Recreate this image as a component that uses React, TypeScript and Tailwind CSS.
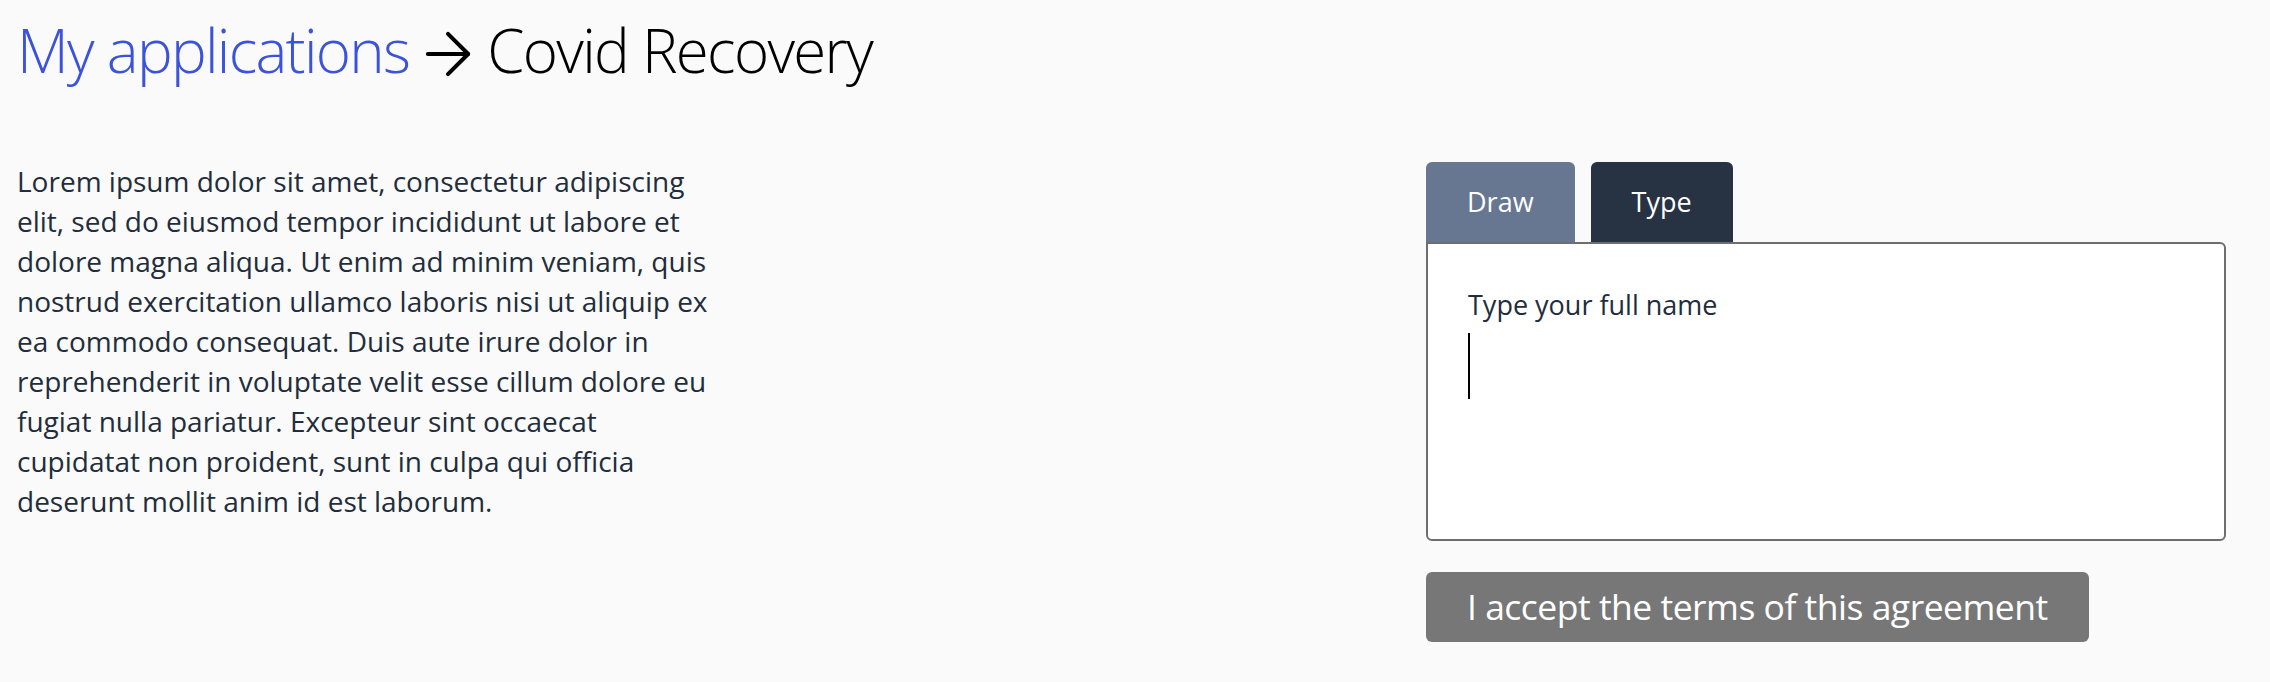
import React from 'react';

const LOREM =
  'Lorem ipsum dolor sit amet, consectetur adipiscing elit, sed do eiusmod tempor incididunt ut labore et dolore magna aliqua. Ut enim ad minim veniam, quis nostrud exercitation ullamco laboris nisi ut aliquip ex ea commodo consequat. Duis aute irure dolor in reprehenderit in voluptate velit esse cillum dolore eu fugiat nulla pariatur. Excepteur sint occaecat cupidatat non proident, sunt in culpa qui officia deserunt mollit anim id est laborum.';

export default function App() {
  return (
    <div className="min-h-screen bg-[#fafafa] font-['Open_Sans',sans-serif] pl-[17px] pr-[44px] pt-[8px]">
      <h1 className="text-[60px] leading-[84px] font-light tracking-[-1.7px] text-black">
        <a href="#" className="text-[#3b53dc]">My applications</a>
        <svg
          viewBox="4 4 16 16"
          className="inline-block w-[46px] h-[46px] mx-[16px] align-[-4px]"
          fill="none"
          stroke="currentColor"
          strokeWidth={1.4}
          strokeLinecap="round"
          strokeLinejoin="round"
        >
          <path d="M5 12h14" />
          <path d="m12 5 7 7-7 7" />
        </svg>
        Covid Recovery
      </h1>

      <div className="mt-[69px] flex justify-between items-start">
        <p className="w-[700px] text-[28px] leading-[40px] text-[#222d3c]">{LOREM}</p>

        <div className="w-[800px] pt-px">
          <div className="flex gap-4">
            <button className="h-[80px] px-[41px] rounded-t-md bg-[#677792] text-white text-[27px]">
              Draw
            </button>
            <button className="h-[80px] px-[41px] rounded-t-md bg-[#273343] text-white text-[27px]">
              Type
            </button>
          </div>
          <div className="h-[299px] border-2 border-[#6e6e6e] rounded-b-md rounded-tr-md bg-white pl-[40px] pt-[41px]">
            <p className="text-[27px] text-[#222d3c]">Type your full name</p>
            <div className="mt-[7px] w-[2px] h-[66px] bg-black" />
          </div>
          <button className="mt-[31px] h-[70px] px-[41px] rounded-md bg-[#777777] text-white text-[35.5px] tracking-[-0.5px]">
            I accept the terms of this agreement
          </button>
        </div>
      </div>
    </div>
  );
}
